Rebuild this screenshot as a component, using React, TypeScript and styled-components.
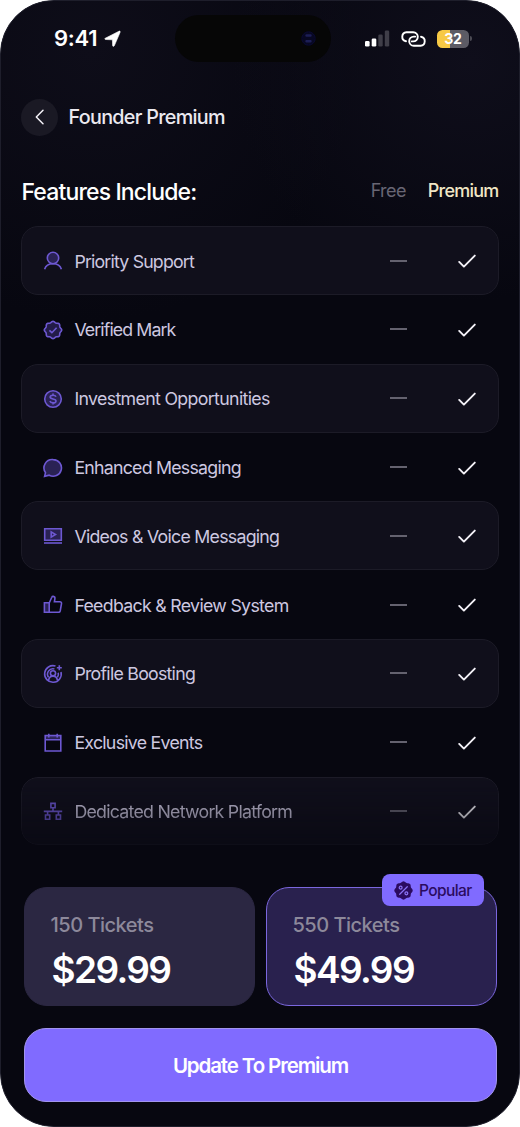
import React from "react";
import styled, { createGlobalStyle, css } from "styled-components";

const GlobalStyle = createGlobalStyle`
  *, *::before, *::after { box-sizing: border-box; }
  body { margin: 0; background: #fff; font-family: Inter, "Liberation Sans", sans-serif; }
`;

const Phone = styled.main`
  width: 520px;
  height: 1127px;
  border-radius: 54px;
  border: 1px solid #1e1e2b;
  overflow: hidden;
  background:
    radial-gradient(circle at 470px 60px, #0f0e1b 0, rgba(15, 14, 27, 0) 240px),
    radial-gradient(circle at 90px 50px, #0e0d19 0, rgba(14, 13, 25, 0) 270px),
    #070710;
  display: flex;
  flex-direction: column;
  color: #fff;
  white-space: nowrap;
`;

const StatusBar = styled.header`
  height: 75px;
  padding: 14px 47px 0 53px;
  display: grid;
  grid-template-columns: 121px 156px 1fr;
  align-items: start;
`;

const Clock = styled.div`
  height: 47px;
  padding-bottom: 1px;
  display: flex;
  align-items: center;
  gap: 7px;
  font-size: 22px;
  font-weight: 600;
  letter-spacing: -0.3px;
`;

const Island = styled.div`
  height: 47px;
  border-radius: 24px;
  background: #060606;
  display: flex;
  align-items: center;
  justify-content: flex-end;
  padding-right: 15px;
`;

const StatusIcons = styled.div`
  height: 47px;
  display: flex;
  align-items: center;
  justify-content: flex-end;
  gap: 11px;
`;

const BatteryWrap = styled.div`
  display: flex;
  align-items: center;
  gap: 1px;
  &::after {
    content: "";
    width: 2px;
    height: 5px;
    border-radius: 0 2px 2px 0;
    background: #4b4a53;
  }
`;

const Battery = styled.div`
  width: 32px;
  height: 18px;
  border-radius: 5.5px;
  background: linear-gradient(90deg, #f7c945 0 40%, #5c5b65 40%);
  text-align: center;
  font-size: 14px;
  line-height: 18px;
  font-weight: 700;
  letter-spacing: -0.3px;
`;

const TitleBar = styled.div`
  height: 82px;
  padding-left: 20px;
  display: flex;
  align-items: center;
  gap: 10.5px;
`;

const BackButton = styled.button`
  width: 37px;
  height: 37px;
  padding: 0;
  border: 0;
  border-radius: 50%;
  background: #1a1924;
  display: grid;
  place-items: center;
`;

const Title = styled.h1`
  margin: 0;
  font-size: 19.75px;
  font-weight: 500;
  letter-spacing: -0.7px;
  color: #ebe9f0;
`;

const TableHead = styled.div`
  height: 68.25px;
  padding: 0 20.5px 0.75px 20.5px;
  display: flex;
  align-items: center;
`;

const Heading = styled.h2`
  margin: 0;
  flex: 1;
  font-size: 23px;
  font-weight: 500;
  letter-spacing: -0.86px;
`;

const ColumnLabel = styled.span<{ $premium?: boolean }>`
  margin-top: -2px;
  font-size: 18px;
  font-weight: ${(p) => (p.$premium ? 500 : 400)};
  letter-spacing: ${(p) => (p.$premium ? "-0.77px" : "-0.6px")};
  color: ${(p) => (p.$premium ? "#f0e6c5" : "#686674")};
  margin-left: ${(p) => (p.$premium ? "22px" : "0")};
`;

const List = styled.ul`
  margin: 0;
  padding: 0 20.4px;
  list-style: none;
  height: 619.2px;
  display: grid;
  grid-template-rows: repeat(9, 1fr);
`;

const FeatureRow = styled.li<{ $card?: boolean; $faded?: boolean }>`
  display: grid;
  grid-template-columns: 20px 1fr 17px 69px;
  align-items: center;
  padding: 1px 21.5px 0 21px;
  border-radius: 17px;
  border: 1px solid transparent;
  ${(p) => p.$card && css`
    background: #100f1b;
    border-color: #1c1b27;
  `}
  ${(p) => p.$faded && css`
    -webkit-mask-image: linear-gradient(#000 0%, rgba(0, 0, 0, 0.33) 105%);
    mask-image: linear-gradient(#000 0%, rgba(0, 0, 0, 0.33) 105%);
  `}
`;

const RowLabel = styled.span<{ $spacing: number }>`
  padding-left: 11px;
  font-size: 17.75px;
  letter-spacing: ${(p) => p.$spacing}px;
  color: #cdc8e0;
`;

const Dash = styled.span`
  width: 17px;
  height: 2px;
  margin-top: -1px;
  background: #64626f;
`;

const CheckCell = styled.span`
  display: flex;
  justify-content: flex-end;
`;

const Plans = styled.section`
  margin: 41.75px 22px 0 23px;
  display: grid;
  grid-template-columns: 1fr 1fr;
  gap: 11px;
`;

const Plan = styled.article<{ $active?: boolean }>`
  position: relative;
  height: 119px;
  border-radius: 23px;
  border: 1px solid ${(p) => (p.$active ? "#7b67de" : "#2b2742")};
  background: ${(p) => (p.$active ? "#29214e" : "#2b2742")};
  padding: 24px 26px 0 25.5px;
`;

const Tickets = styled.div`
  font-size: 20px;
  line-height: 26px;
  font-weight: 500;
  letter-spacing: -0.5px;
  color: #8d899b;
`;

const Price = styled.div`
  margin: 10px 0 0 1px;
  font-size: 37px;
  line-height: 44px;
  font-weight: 600;
  letter-spacing: -1.6px;
`;

const Popular = styled.div`
  position: absolute;
  top: -14px;
  right: 12px;
  width: 102px;
  height: 32px;
  border-radius: 8px;
  background: #806bff;
  color: #2b0b60;
  display: flex;
  align-items: center;
  padding-left: 12px;
  gap: 6px;
  font-size: 15.5px;
  font-weight: 500;
  letter-spacing: -0.6px;
`;

const UpdateButton = styled.button`
  margin: 21.5px 22px 0 23px;
  height: 74px;
  padding: 2px 0 0;
  border-radius: 22px;
  border: 1px solid #a294ee;
  background: #806bff;
  color: #fff;
  font-family: inherit;
  font-size: 20.5px;
  font-weight: 600;
  letter-spacing: -1.12px;
`;

/* Wavy seal outline: radius oscillates around the centre, one lobe per bump. */
const sealPath = (c: number, r: number, amp: number, lobes: number) =>
  Array.from({ length: 97 }, (_, i) => {
    const a = (i / 96) * Math.PI * 2;
    const k = r + amp * Math.cos(lobes * a);
    return `${i ? "L" : "M"}${(c + k * Math.sin(a)).toFixed(2)} ${(c - k * Math.cos(a)).toFixed(2)}`;
  }).join("") + "Z";

const icons: Record<string, React.ReactNode> = {
  support: (
    <>
      <circle cx="10" cy="7" r="5.7" fill="#2a2254" />
      <path d="M1.600 18.200c1-3.200 3.900-5.400 8.400-5.400s7.400 2.200 8.400 5.400" />
    </>
  ),
  verified: (
    <>
      <path d={sealPath(10, 8.1, 0.6, 8)} fill="#231c49" />
      <path d="m6.400 10.300 2.500 2.400 4.700-5" />
    </>
  ),
  invest: (
    <>
      <circle cx="10" cy="10" r="8.300" fill="#2a2254" />
      <path d="M13 7.800C12.600 6.700 11.500 6.200 10 6.200c-1.700 0-2.900.7-2.900 1.900 0 2.700 5.900 1 5.900 3.800 0 1.300-1.300 2-3 2s-2.700-.7-3.100-1.800M10 4.600v1.600M10 13.900v1.600" />
    </>
  ),
  message: (
    <path d="M10.200 1.600a8.300 8.300 0 1 1-4 15.600L1.600 18.300l.9-3.700A8.300 8.300 0 0 1 10.200 1.600Z" fill="#2a2254" />
  ),
  video: (
    <>
      <path d="M1.700 2.800h16.600v11.400H1.700z" fill="#2a2254" />
      <path d="M1 17h18" />
      <path d="m8.200 5.900 4.300 2.600-4.300 2.600z" />
    </>
  ),
  thumb: (
    <>
      <path d="M1.400 7.800h4.800v9.500H1.400z" fill="#2a2254" />
      <path d="M6.200 8 8.800 2.300c.3-.7.900-1 1.500-.9 1.100.2 1.800 1.100 1.600 2.200L11.400 6.800h5.400c1.200 0 1.900.8 1.700 1.900l-1.300 7.300c-.2.800-.8 1.300-1.600 1.300H6.200" />
    </>
  ),
  profile: (
    <>
      <path d="M12.500 2.100A8.300 8.300 0 1 0 18 8" />
      <path d="M5.600 13.400A5.400 5.400 0 0 1 11.400 5M15.200 8.800a5.400 5.400 0 0 1-.8 4.600" />
      <circle cx="10" cy="9.300" r="2.600" />
      <path d="M5.600 16.200c.4-2.700 2-4.100 4.400-4.100s4 1.400 4.400 4.100M16.300 1.200v5M13.800 3.700h5" />
    </>
  ),
  calendar: (
    <>
      <path d="M2.200 2.600h15.600v15.400H2.200z" />
      <path d="M2.200 6.700h15.600M5.800.7v3.800M14.200.7v3.800" />
      <path d="M2.900 4.600h14.200" strokeOpacity=".4" strokeWidth="2.600" />
    </>
  ),
  network: (
    <>
      <path d="M7.900 1.400h4.200v4.400H7.900zM2.500 13h4.200v4.300H2.500zM13.300 13h4.200v4.300h-4.200z" />
      <path d="M10 5.800v3.600M.8 9.400h18.400M4.600 9.400V13M15.400 9.400V13" />
    </>
  ),
};

const FeatureIcon = ({ name }: { name: string }) => (
  <svg width="20" height="20" viewBox="0 0 20 20" fill="none" stroke="#6d58d2" strokeWidth="1.600">
    {icons[name]}
  </svg>
);

const features: { icon: string; label: string; spacing: number }[] = [
  { icon: "support", label: "Priority Support", spacing: -0.82 },
  { icon: "verified", label: "Verified Mark", spacing: -0.9 },
  { icon: "invest", label: "Investment Opportunities", spacing: -0.66 },
  { icon: "message", label: "Enhanced Messaging", spacing: -0.76 },
  { icon: "video", label: "Videos & Voice Messaging", spacing: -0.74 },
  { icon: "thumb", label: "Feedback & Review System", spacing: -0.7 },
  { icon: "profile", label: "Profile Boosting", spacing: -0.75 },
  { icon: "calendar", label: "Exclusive Events", spacing: -0.73 },
  { icon: "network", label: "Dedicated Network Platform", spacing: -0.74 },
];

export default function App() {
  return (
    <>
      <GlobalStyle />
      <Phone>
        <StatusBar>
          <Clock>
            9:41
            <svg width="17" height="17" viewBox="0 0 17 17">
              <path d="M1.300 8.200 15 1.200c.8-.4 1.500.3 1.100 1.100L10.300 15.800c-.4.900-1.700.7-1.700-.3L8.400 9.800 1.700 9.500C.6 9.400.4 8.600 1.300 8.200Z" fill="#fff" stroke="#fff" strokeWidth=".6" strokeLinejoin="round" />
            </svg>
          </Clock>
          <Island>
            <svg width="15" height="15" viewBox="0 0 15 15">
              <circle cx="7.500" cy="7.500" r="6.700" fill="#080822" stroke="#0b0b33" />
              <path d="M5.500 4.500h4M5.500 10.300h4" stroke="#1c1e56" strokeWidth="2.400" strokeLinecap="round" />
            </svg>
          </Island>
          <StatusIcons>
            <svg width="25" height="17" viewBox="0 0 25 17">
              <rect x="0" y="11" width="4.600" height="5.500" rx="1.300" fill="#fff" />
              <rect x="6.700" y="8.500" width="4.600" height="8" rx="1.300" fill="#fff" />
              <rect x="13.300" y="4.500" width="4.400" height="12" rx="1.300" fill="#3f3e48" />
              <rect x="19.800" y="0.500" width="4.400" height="16" rx="1.300" fill="#3f3e48" />
            </svg>
            <svg width="25" height="16" viewBox="0 0 25 16" fill="none" stroke="#fff" strokeWidth="1.900" strokeLinecap="round">
              <path d="M5 10.300A4.600 4.600 0 0 1 5.500 1.200h6.700a4.600 4.600 0 0 1 0 9.200H10.800" />
              <path d="M20 5.700a4.600 4.600 0 0 1-.5 9.100h-6.700a4.600 4.600 0 0 1 0-9.200h1.400" />
            </svg>
            <BatteryWrap>
              <Battery>32</Battery>
            </BatteryWrap>
          </StatusIcons>
        </StatusBar>

        <TitleBar>
          <BackButton aria-label="Back">
            <svg width="10" height="16" viewBox="0 0 10 16" fill="none" stroke="#f1eff5" strokeWidth="1.500" strokeLinecap="round" strokeLinejoin="round">
              <path d="M8 1.300 1.300 8 8 14.700" />
            </svg>
          </BackButton>
          <Title>Founder Premium</Title>
        </TitleBar>

        <TableHead>
          <Heading>Features Include:</Heading>
          <ColumnLabel>Free</ColumnLabel>
          <ColumnLabel $premium>Premium</ColumnLabel>
        </TableHead>

        <List>
          {features.map((f, i) => (
            <FeatureRow key={f.label} $card={i % 2 === 0} $faded={i === 8}>
              <FeatureIcon name={f.icon} />
              <RowLabel $spacing={f.spacing}>{f.label}</RowLabel>
              <Dash />
              <CheckCell>
                <svg width="18" height="14" viewBox="0 0 18 14" fill="none" stroke="#f4f2f8" strokeWidth="1.900" strokeLinecap="round" strokeLinejoin="round">
                  <path d="m1.200 7.900 4.700 4.700L16.800 1.600" />
                </svg>
              </CheckCell>
            </FeatureRow>
          ))}
        </List>

        <Plans>
          <Plan>
            <Tickets>150 Tickets</Tickets>
            <Price>$29.99</Price>
          </Plan>
          <Plan $active>
            <Tickets>550 Tickets</Tickets>
            <Price>$49.99</Price>
            <Popular>
              <svg width="19" height="19" viewBox="0 0 20 20">
                <path d={sealPath(10, 9.100, 0.6, 8)} fill="#2b0b60" />
                <g fill="none" stroke="#8a72f5" strokeWidth="1.300" strokeLinecap="round">
                  <circle cx="7" cy="7" r="1.500" />
                  <circle cx="13" cy="13" r="1.500" />
                  <path d="M14 6 6 14" />
                </g>
              </svg>
              Popular
            </Popular>
          </Plan>
        </Plans>
        <UpdateButton>Update To Premium</UpdateButton>
      </Phone>
    </>
  );
}
